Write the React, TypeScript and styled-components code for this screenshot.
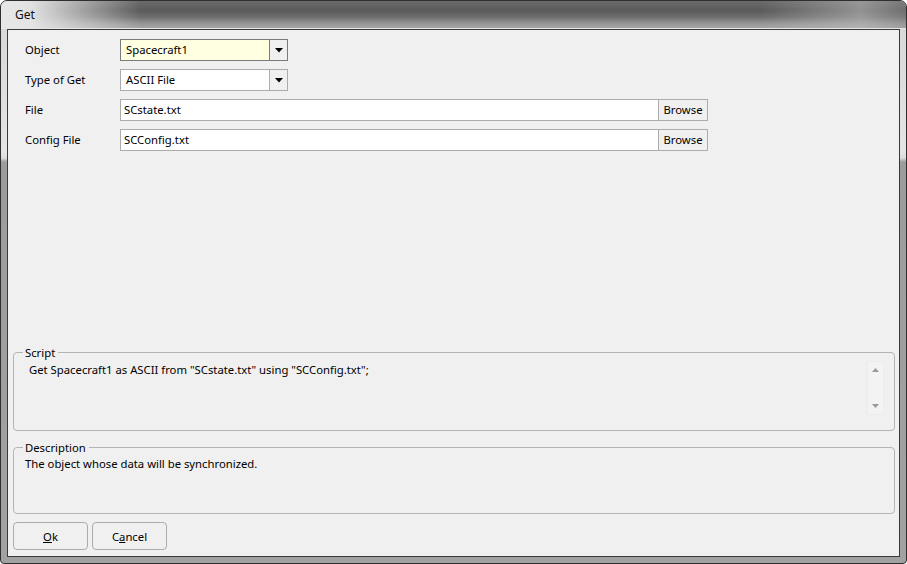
import styled, { createGlobalStyle } from "styled-components";

const GlobalStyle = createGlobalStyle`
  html, body {
    margin: 0;
    padding: 0;
    background: #ffffff;
  }
  body {
    font-family: "Noto Sans", "Open Sans", sans-serif;
    font-size: 11.3px;
    color: #000;
  }
  * {
    box-sizing: border-box;
  }
`;

interface ComboProps {
  value: string;
  focused?: boolean;
}

function Combo({ value, focused }: ComboProps) {
  return (
    <ComboBox $focused={focused}>
      <ComboValue>{value}</ComboValue>
      <ComboArrow $focused={focused}>
        <svg width="8" height="5" viewBox="0 0 8 5">
          <path d="M0 0 H8 L4 4.5 Z" fill="#000" />
        </svg>
      </ComboArrow>
    </ComboBox>
  );
}

function FileField({ value }: { value: string }) {
  return (
    <FileBox>
      <TextInput>{value}</TextInput>
      <BrowseButton>Browse</BrowseButton>
    </FileBox>
  );
}

export default function App() {
  return (
    <>
      <GlobalStyle />
      <Window>
        <TitleBar>
          <Title>Get</Title>
        </TitleBar>
        <Client>
          <Form>
            <Label>Object</Label>
            <Combo value="Spacecraft1" focused />
            <Label>Type of Get</Label>
            <Combo value="ASCII File" />
            <Label>File</Label>
            <FileField value="SCstate.txt" />
            <Label>Config File</Label>
            <FileField value="SCConfig.txt" />
          </Form>
          <Spacer />
          <Group $height={86} $gap={9}>
            <Legend>Script</Legend>
            <ScriptBody>
              <ScriptText>
                Get Spacecraft1 as ASCII from "SCstate.txt" using "SCConfig.txt";
              </ScriptText>
              <ScrollTrack>
                <svg width="7" height="4" viewBox="0 0 7 4">
                  <path d="M0 4 L3.5 0 L7 4 Z" fill="#9a9a9a" />
                </svg>
                <svg width="7" height="4" viewBox="0 0 7 4">
                  <path d="M0 0 H7 L3.5 4 Z" fill="#9a9a9a" />
                </svg>
              </ScrollTrack>
            </ScriptBody>
          </Group>
          <Group $height={74} $gap={2}>
            <Legend>Description</Legend>
            <DescText>The object whose data will be synchronized.</DescText>
          </Group>
          <ButtonRow>
            <DialogButton>
              <u>O</u>k
            </DialogButton>
            <DialogButton>
              C<u>a</u>ncel
            </DialogButton>
          </ButtonRow>
        </Client>
      </Window>
    </>
  );
}

const Window = styled.div`
  width: 907px;
  height: 564px;
  display: flex;
  flex-direction: column;
  border: 1px solid #2f2f2f;
  border-radius: 7px 7px 4px 4px;
  overflow: hidden;
  background: linear-gradient(
    to bottom,
    #d6d6d6 0,
    #e4e4e4 150px,
    #dcdcdc 157px,
    #9c9c9c 161px,
    #a2a2a2 100%
  );
`;

const TitleBar = styled.div`
  height: 28px;
  flex: none;
  display: flex;
  align-items: center;
  padding-left: 14px;
  border-bottom: 1px solid #e6e6e6;
  background:
    linear-gradient(
      to right,
      rgba(232, 232, 232, 1) 0,
      rgba(232, 232, 232, 0.95) 30px,
      rgba(232, 232, 232, 0) 140px,
      rgba(232, 232, 232, 0) 760px,
      rgba(190, 190, 190, 0.55) 860px,
      rgba(150, 150, 150, 0.3) 907px
    ),
    linear-gradient(
      to bottom,
      #6a6a6a 0,
      #5b5b5b 35%,
      #6e6e6e 60%,
      #989898 85%,
      #a4a4a4 100%
    );
`;

const Title = styled.span`
  font-size: 12px;
  color: #111;
`;

const Client = styled.div`
  flex: 1;
  display: flex;
  flex-direction: column;
  margin: 0 6px 6px;
  border: 1px solid #3a3a3a;
  background: #f0f0f0;
  padding: 9px 4px 6px 5px;
`;

const Form = styled.div`
  display: grid;
  grid-template-columns: 95px 588px;
  row-gap: 8px;
  padding-left: 12px;
  align-items: center;
`;

const Label = styled.div`
  line-height: 22px;
`;

const ComboBox = styled.div<{ $focused?: boolean }>`
  width: 168px;
  height: 22px;
  display: flex;
  border: 1px solid ${p => (p.$focused ? "#7a7a7a" : "#acacac")};
  background: ${p => (p.$focused ? "#ffffe1" : "#ffffff")};
`;

const ComboValue = styled.div`
  flex: 1;
  padding-left: 5px;
  line-height: 20px;
`;

const ComboArrow = styled.div<{ $focused?: boolean }>`
  width: 18px;
  display: flex;
  align-items: center;
  justify-content: center;
  background: #f0f0f0;
  border-left: 1px solid ${p => (p.$focused ? "#7a7a7a" : "#acacac")};
`;

const FileBox = styled.div`
  width: 588px;
  height: 22px;
  display: flex;
`;

const TextInput = styled.div`
  flex: 1;
  border: 1px solid #acacac;
  border-right: none;
  background: #fff;
  padding-left: 3px;
  line-height: 20px;
`;

const BrowseButton = styled.div`
  width: 50px;
  border: 1px solid #acacac;
  background: #f0f0f0;
  text-align: center;
  line-height: 20px;
`;

const Spacer = styled.div`
  flex: 1;
`;

const Group = styled.fieldset<{ $height: number; $gap: number }>`
  height: ${p => p.$height}px;
  margin: 0 0 ${p => p.$gap}px 0;
  padding: 0 10px 0 11px;
  border: 1px solid #b4b4b4;
  border-radius: 4px;
  min-width: 0;
`;

const Legend = styled.legend`
  margin-left: -2px;
  padding: 0 3px 0 2px;
  line-height: 15px;
`;

const ScriptBody = styled.div`
  display: flex;
  align-items: flex-start;
  justify-content: space-between;
`;

const ScriptText = styled.div`
  padding: 2px 0 0 4px;
  white-space: pre;
`;

const ScrollTrack = styled.div`
  width: 17px;
  height: 54px;
  margin-top: 1px;
  display: flex;
  flex-direction: column;
  align-items: center;
  justify-content: space-between;
  padding: 6px 0 6px;
  border: 1px solid #ececec;
  background: #f3f3f3;
`;

const DescText = styled.div`
  padding-top: 1px;
`;

const ButtonRow = styled.div`
  display: flex;
  gap: 4px;
  margin-top: 6px;
`;

const DialogButton = styled.div`
  width: 75px;
  height: 28px;
  display: flex;
  align-items: center;
  justify-content: center;
  border: 1px solid #acacac;
  border-radius: 4px;
  background: #f0f0f0;
`;
